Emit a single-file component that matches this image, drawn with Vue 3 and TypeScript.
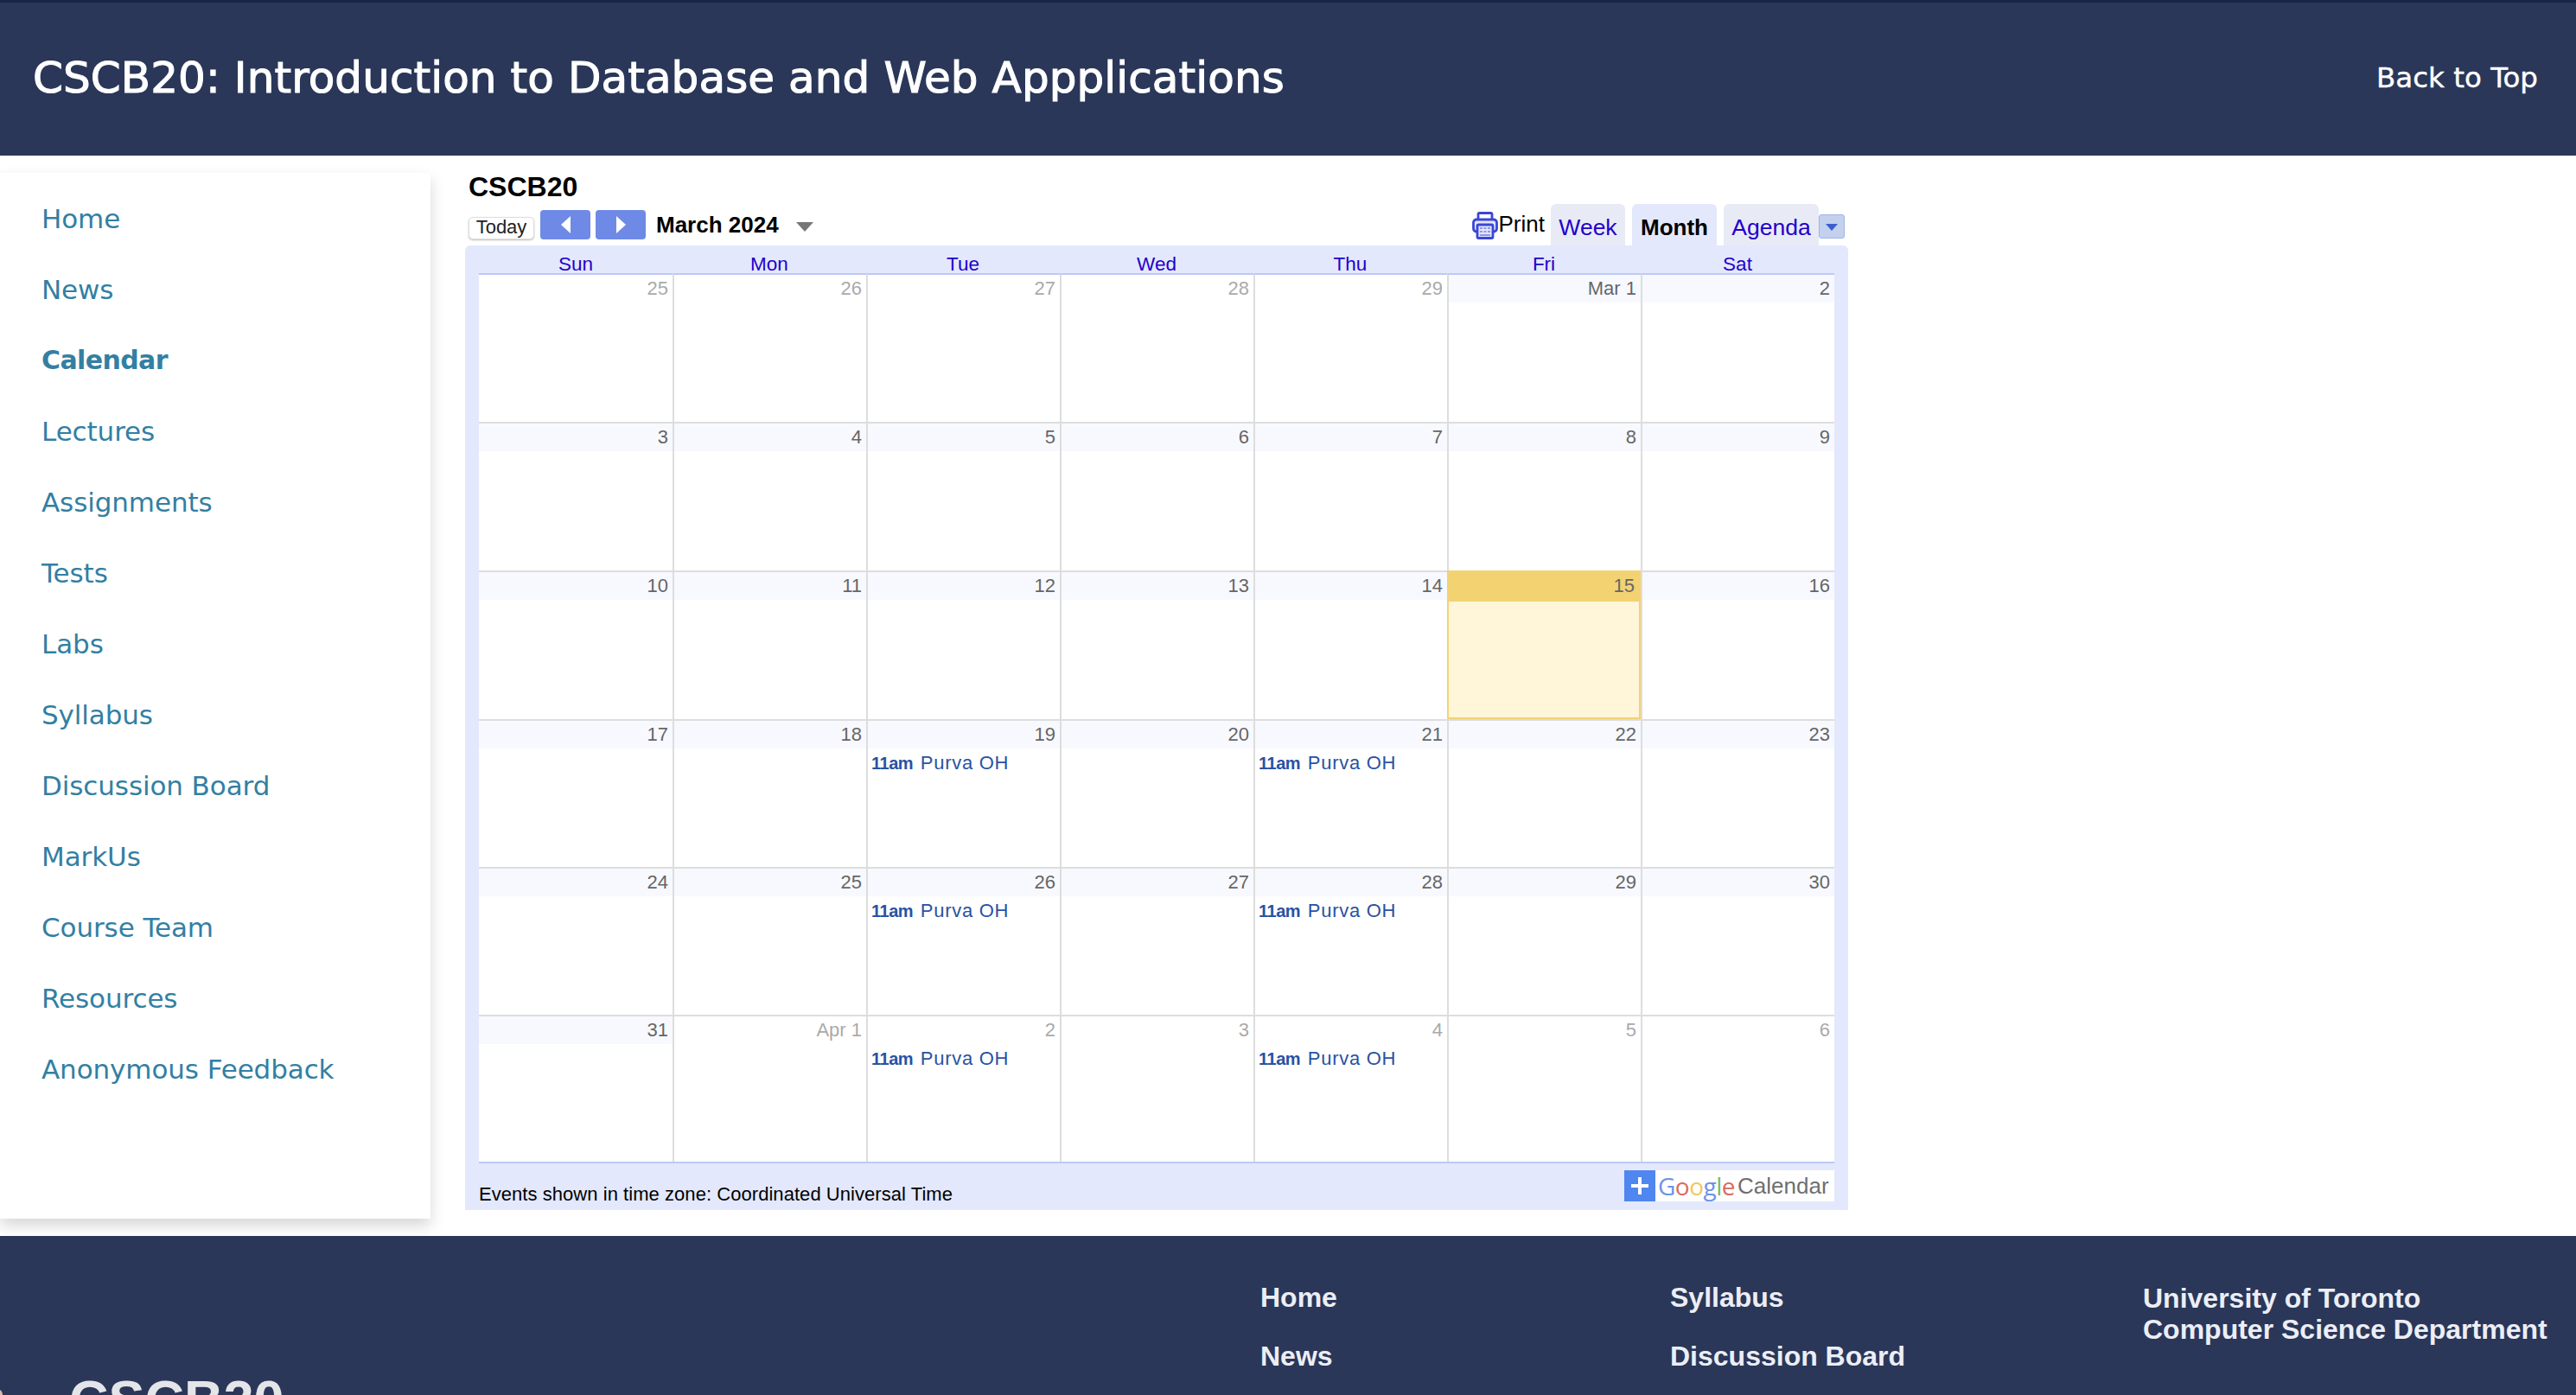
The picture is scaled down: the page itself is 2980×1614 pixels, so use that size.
<template>
  <div class="page">
    <header class="masthead">
      <h1>CSCB20: Introduction to Database and Web Appplications</h1>
      <a class="back">Back to Top</a>
    </header>

    <main class="main">
      <nav class="side">
        <a v-for="item in navItems" :key="item" :class="{ active: item === 'Calendar' }">{{ item }}</a>
      </nav>

      <section class="cal">
        <div class="cal-title">CSCB20</div>
        <div class="toolbar">
          <button class="today-btn">Today</button>
          <button class="arrow"><span class="tri-left"></span></button>
          <button class="arrow"><span class="tri-right"></span></button>
          <span class="month">March 2024</span>
          <span class="month-drop"></span>
          <span class="spacer"></span>
          <svg class="printer" viewBox="0 0 30 32" width="30" height="32">
            <path d="M7 9V3a1.5 1.5 0 0 1 1.5-1.5h13A1.5 1.5 0 0 1 23 3v6" fill="none" stroke="#3b46d6" stroke-width="2.8" />
            <rect x="1.5" y="9" width="27" height="14" rx="3.5" fill="#e2e6fb" stroke="#3b46d6" stroke-width="2.8" />
            <rect x="6" y="15" width="18" height="15.5" rx="1.5" fill="#e2e6fb" stroke="#3b46d6" stroke-width="2.8" />
            <path d="M9 19h3M13.5 19h3M18 19h3M9 23h3M13.5 23h3M18 23h3M9 27h12" stroke="#8f97e6" stroke-width="1.8" />
          </svg>
          <span class="print">Print</span>
          <div class="tab week">Week</div>
          <div class="tab on">Month</div>
          <div class="tab agenda">Agenda</div>
          <span class="drop"><i></i></span>
        </div>

        <div class="panel">
          <div class="days">
            <span v-for="d in dayNames" :key="d">{{ d }}</span>
          </div>
          <div class="grid">
            <div
              v-for="(c, i) in cells"
              :key="i"
              :class="['cell', { first: i % 7 === 0, 'first-row': i < 7, current: c.today }]"
            >
              <div :class="['date', { shaded: !c.muted, dim: c.muted }]">{{ c.label }}</div>
              <div v-if="c.event" class="event"><b>11am</b> Purva OH</div>
            </div>
          </div>
          <div class="panel-foot">
            <span class="tz">Events shown in time zone: Coordinated Universal Time</span>
            <div class="gcal">
              <span class="plus"><i></i><i></i></span>
              <span class="glogo"><b class="c1">G</b><b class="c2">o</b><b class="c3">o</b><b class="c1">g</b><b class="c4">l</b><b class="c2">e</b></span>
              <span class="gname">Calendar</span>
            </div>
          </div>
        </div>
      </section>
    </main>

    <footer class="foot">
      <span class="corner"></span>
      <div class="foot-name">CSCB20</div>
      <div class="foot-links one">
        <a>Home</a>
        <a>News</a>
      </div>
      <div class="foot-links two">
        <a>Syllabus</a>
        <a>Discussion Board</a>
      </div>
      <div class="foot-dept">University of Toronto<br />Computer Science Department</div>
    </footer>
  </div>
</template>

<script setup lang="ts">
interface Cell {
  label: string;
  muted?: boolean;
  today?: boolean;
  event?: boolean;
}

const navItems = [
  "Home", "News", "Calendar", "Lectures", "Assignments", "Tests", "Labs",
  "Syllabus", "Discussion Board", "MarkUs", "Course Team", "Resources", "Anonymous Feedback",
];
const dayNames = ["Sun", "Mon", "Tue", "Wed", "Thu", "Fri", "Sat"];

const cells: Cell[] = [];
for (const d of [25, 26, 27, 28, 29]) cells.push({ label: String(d), muted: true });
cells.push({ label: "Mar 1" });
for (let d = 2; d <= 31; d++) {
  // office hours fall on Tue/Thu from the 19th on
  cells.push({ label: String(d), today: d === 15, event: [19, 21, 26, 28].includes(d) });
}
cells.push({ label: "Apr 1", muted: true });
[2, 3, 4, 5, 6].forEach((d) => cells.push({ label: String(d), muted: true, event: d === 2 || d === 4 }));
</script>

<style>
html, body { margin: 0; height: 100%; overflow: hidden; background: #fff; }
</style>

<style scoped>
.page {
  width: 2980px; height: 1614px; overflow: hidden;
  display: flex; flex-direction: column;
  font-family: "Liberation Sans", Arial, sans-serif;
}
.masthead {
  height: 180px; box-sizing: border-box;
  border-top: 3px solid #1a2444;
  background: #2a3759; color: #fff;
  display: flex; align-items: center; justify-content: space-between;
  padding: 0 44px 4px 38px;
  font-family: "DejaVu Sans", sans-serif;
}
.masthead h1 { margin: 0; font-size: 50px; font-weight: 400; letter-spacing: 0.08px; -webkit-text-stroke: 1.1px #fff; }
.back { font-size: 32.5px; -webkit-text-stroke: 0.4px #fff; }

.main { height: 1250px; display: flex; align-items: flex-start; }
.side {
  width: 498px; height: 1210px; box-sizing: border-box;
  margin-top: 20px; padding-top: 12px;
  display: flex; flex-direction: column;
  background: #fff;
  box-shadow: 0 8px 16px rgba(0, 0, 0, 0.16);
  font-family: "DejaVu Sans", sans-serif;
}
.side a { height: 82px; line-height: 82px; padding-left: 48px; font-size: 31px; letter-spacing: -0.1px; color: #337fa3; }
.side a.active { font-weight: 700; font-size: 30px; letter-spacing: -0.6px; }

.cal { width: 1600px; margin-left: 40px; }
.cal-title { height: 43px; padding: 18px 0 0 4px; font-size: 32px; line-height: 37px; font-weight: 700; color: #000; }
.toolbar { height: 43px; display: flex; align-items: flex-end; position: relative; padding-right: 4px; }
.today-btn {
  width: 76px; height: 26px; margin: 0 7px 7px 4px; padding: 0 0 3px;
  border: 1px solid #ddd; border-radius: 5px; background: #fff;
  box-shadow: 0 1px 2px rgba(0, 0, 0, 0.25);
  font: 22px/22px "Liberation Sans", sans-serif; color: #222;
}
.arrow {
  width: 58px; height: 34px; margin: 0 6px 7px 0; padding: 0;
  border: 0; border-radius: 4px; background: #6e8ae6;
  display: flex; align-items: center; justify-content: center;
}
.tri-left { border: 7px solid transparent; border-left: 0; border-right: 11px solid #fff; border-top-width: 10px; border-bottom-width: 10px; }
.tri-right { border: 7px solid transparent; border-right: 0; border-left: 11px solid #fff; border-top-width: 10px; border-bottom-width: 10px; }
.month { margin: 0 0 9px 6px; font-size: 26px; line-height: 30px; font-weight: 700; color: #000; }
.month-drop { margin: 0 0 16px 20px; border: 10px solid transparent; border-top: 11px solid #777; border-bottom: 0; }
.spacer { flex: 1; }
.printer { margin: 0 1px 7px 0; }
.print { margin: 0 7px 9px 0; font-size: 26px; line-height: 32px; color: #000; }
.tab {
  height: 48px; box-sizing: border-box; padding-top: 11px; text-align: center;
  border-radius: 6px 6px 0 0; background: #e8ebf6;
  font-size: 26.5px; line-height: 32px; color: #2200cc;
}
.tab.week { width: 86px; margin-right: 8px; }
.tab.on { width: 98px; margin-right: 8px; background: #e3e8fc; font-weight: 700; color: #000; font-size: 26px; }
.tab.agenda { width: 110px; }
.drop {
  width: 30px; height: 28px; margin-bottom: 8px; box-sizing: border-box;
  border: 1px solid #9fb4e6; border-radius: 3px; background: #c3d1ee;
  display: flex; align-items: center; justify-content: center;
}
.drop i { border: 7px solid transparent; border-top: 8px solid #3a5fcd; border-bottom: 0; margin-top: 2px; }

.panel { width: 1600px; height: 1116px; box-sizing: border-box; padding: 0 16px; background: #e3e8fc; border-radius: 6px 6px 0 0; }
.days { height: 32px; display: grid; grid-template-columns: repeat(7, 224px); }
.days span { text-align: center; font-size: 22.5px; line-height: 44px; height: 32px; color: #2200cc; }
.grid {
  display: grid; grid-template-columns: repeat(7, 224px);
  grid-template-rows: 172px 172px 172px 171px 171px 170px;
  background: #fff;
  border-bottom: 2px solid #bcc9f5;
}
.cell { border-top: 2px solid #ddd; border-left: 2px solid #ddd; box-sizing: border-box; }
.cell.first { border-left: 0; }
.cell.first-row { border-top-color: #bcc9f5; }
.date {
  height: 32px; box-sizing: border-box; padding-right: 5px; text-align: right;
  font-size: 22px; line-height: 32px; color: #666;
}
.date.shaded { background: #f8f9ff; }
.date.dim { color: #aaa; }
.cell.current { background: #fff6d9; border: 2px solid #f3d272; }
.cell.current .date { background: #f3d272; padding-right: 5px; height: 34px; }
.event { padding: 4px 0 0 4px; font-size: 22px; line-height: 26px; letter-spacing: 0.7px; color: #2952a3; white-space: nowrap; }
.event b { font-size: 20px; letter-spacing: -0.5px; margin-right: 2px; }

.panel-foot { position: relative; height: 54px; }
.tz { position: absolute; left: 0; top: 23px; font-size: 22px; line-height: 26px; letter-spacing: 0.05px; color: #000; white-space: nowrap; }
.gcal { position: absolute; right: 0; top: 8px; width: 243px; height: 36px; display: flex; align-items: center; background: #fff; }
.plus { width: 36px; height: 36px; background: #4f86f0; position: relative; margin-right: 3px; flex: none; }
.plus i { position: absolute; background: #fff; }
.plus i:first-child { left: 8px; top: 16px; width: 20px; height: 4px; }
.plus i:last-child { left: 16px; top: 8px; width: 4px; height: 20px; }
.glogo { font-size: 28px; letter-spacing: -0.5px; font-family: "Open Sans", sans-serif; }
.glogo b { font-weight: 500; }
.c1 { color: #6c93e8; }
.c2 { color: #dd6a5c; }
.c3 { color: #f1c85a; }
.c4 { color: #76b67a; }
.gname { font-size: 26px; color: #6f6f6f; margin-left: 3px; }

.foot {
  height: 184px; position: relative; overflow: hidden;
  background: #2a3759; color: #eceef5; font-weight: 700; font-size: 32px;
}
.corner { position: absolute; left: -5px; top: 178px; width: 8px; height: 12px; border-radius: 50%; background: #d8b9ad; }
.foot-name { position: absolute; left: 80px; top: 154px; font-size: 63px; line-height: 70px; color: #e4e5e9; }
.foot-links { position: absolute; top: 53px; display: flex; flex-direction: column; gap: 32px; line-height: 36px; }
.foot-links.one { left: 1458px; }
.foot-links.two { left: 1932px; }
.foot-dept { position: absolute; left: 2479px; top: 54px; line-height: 36px; white-space: nowrap; }
</style>
